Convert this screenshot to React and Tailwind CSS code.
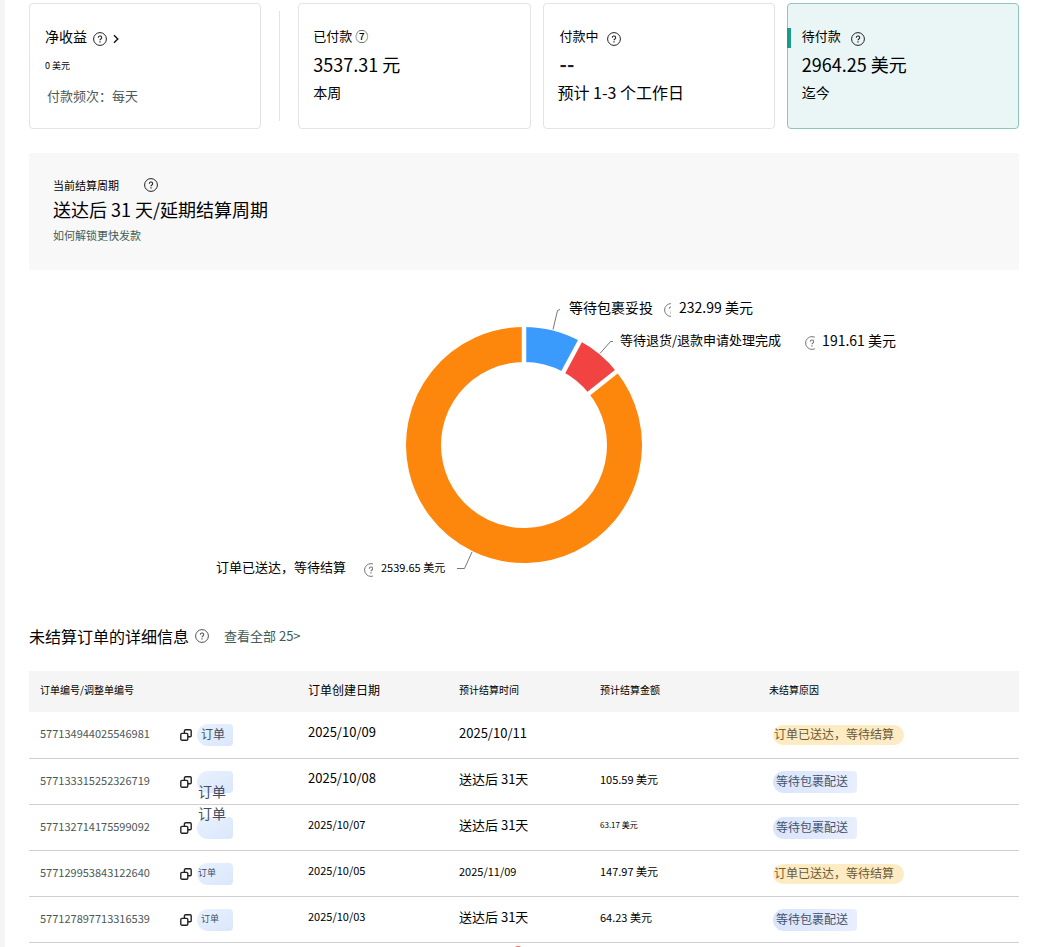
import React from 'react';

const slices = [
  { name: '等待包裹妥投', value: 232.99, color: '#3b9bfd' },
  { name: '等待退货/退款申请处理完成', value: 191.61, color: '#f24343' },
  { name: '订单已送达，等待结算', value: 2539.65, color: '#fd870d' },
];

const orders = [
  {
    id: '577134944025546981',
    tag: 'text-xs left-1 top-0',
    created: '2025/10/09',
    createdSize: 'text-[13px]',
    settle: '2025/10/11',
    settleSize: 'text-[13px]',
    amount: '',
    amountSize: 'text-[11px]',
    delivered: true,
  },
  {
    id: '577133315252326719',
    tag: 'text-sm left-px top-2.5',
    created: '2025/10/08',
    createdSize: 'text-[13px]',
    settle: '送达后 31天',
    settleSize: 'text-[13px]',
    amount: '105.59 美元',
    amountSize: 'text-[11px]',
    delivered: false,
  },
  {
    id: '577132714175599092',
    tag: 'text-sm left-px -top-3.5',
    created: '2025/10/07',
    createdSize: 'text-[11px]',
    settle: '送达后 31天',
    settleSize: 'text-[13px]',
    amount: '63.17 美元',
    amountSize: 'text-[8px]',
    delivered: false,
  },
  {
    id: '577129953843122640',
    tag: 'text-[9px] left-px top-0',
    created: '2025/10/05',
    createdSize: 'text-[11px]',
    settle: '2025/11/09',
    settleSize: 'text-[11px]',
    amount: '147.97 美元',
    amountSize: 'text-[11px]',
    delivered: true,
  },
  {
    id: '577127897713316539',
    tag: 'text-[9px] left-1 top-0',
    created: '2025/10/03',
    createdSize: 'text-[11px]',
    settle: '送达后 31天',
    settleSize: 'text-[13px]',
    amount: '64.23 美元',
    amountSize: 'text-[11px]',
    delivered: false,
  },
];

const HelpIcon = ({ viewBox = '0 0 14 14', className = 'w-3.5 text-[#222]' }) => (
  <svg viewBox={viewBox} className={`h-3.5 shrink-0 ${className}`} fill="none" stroke="currentColor" aria-hidden="true">
    <circle cx="7" cy="7" r="6.4" strokeWidth="1" />
    <path d="M5.3 5.7a1.7 1.6 0 1 1 2.6 1.3c-.6.4-.9.6-.9 1.2" strokeWidth="1.1" />
    <path d="M7 9.2v1.2" strokeWidth="1.2" />
  </svg>
);

const CopyIcon = () => (
  <svg viewBox="0 0 12 12" className="h-3 w-3" fill="none" stroke="#222" strokeWidth="1.4" aria-hidden="true">
    <rect x="0.8" y="4.4" width="7" height="6.8" rx="1.2" />
    <path d="M4.4 4.2V1.9a1.1 1.1 0 0 1 1.1-1.1h4.6a1.1 1.1 0 0 1 1.1 1.1v4.8a1.1 1.1 0 0 1-1.1 1.1H8" />
  </svg>
);

const point = (angle, radius) => {
  const rad = (angle * Math.PI) / 180;
  return [380 + radius * Math.sin(rad), 175 - radius * Math.cos(rad)];
};

const Donut = () => {
  const total = slices.reduce((sum, s) => sum + s.value, 0);
  let start = 0;
  const arcs = slices.map((s) => {
    const end = start + (s.value / total) * 360;
    const arc = { ...s, start, end };
    start = end;
    return arc;
  });

  return (
    <svg viewBox="0 0 760 330" className="h-[330px] w-[760px]" fill="none" aria-hidden="true">
      {arcs.map((a) => {
        const [x1, y1] = point(a.start, 100.5);
        const [x2, y2] = point(a.end, 100.5);
        const large = a.end - a.start > 180 ? 1 : 0;
        return (
          <path
            key={a.name}
            d={`M${x1} ${y1}A100.5 100.5 0 ${large} 1 ${x2} ${y2}`}
            stroke={a.color}
            strokeWidth="35"
          />
        );
      })}
      {arcs.map((a) => {
        const [x1, y1] = point(a.start, 80);
        const [x2, y2] = point(a.start, 121);
        return <line key={a.name} x1={x1} y1={y1} x2={x2} y2={y2} stroke="#fff" strokeWidth="4.5" />;
      })}
      {/* Leader lines */}
      <g stroke="#777" strokeWidth="1">
        <path d="M409 59.5L413.5 40.5L416 39.5" />
        <path d="M456 83.5L466.5 71.5H469" />
        <path d="M328 282L320.5 298.5H313" />
      </g>
    </svg>
  );
};

const App = () => {
  return (
    <main className="min-h-screen overflow-hidden border-l-[5px] border-[#f5f5f5] bg-white pt-[3px] pr-[22px] pl-6 font-['Noto_Sans_CJK_SC',sans-serif] text-black">
      {/* Summary cards */}
      <section className="grid grid-cols-[1fr_auto_1fr_1fr_1fr] gap-3">
        <div className="h-[126px] rounded border border-[#e3e3e3] px-[15px] pt-[22px]">
          <div className="flex items-end gap-1.5">
            <h2 className="text-sm leading-5">净收益</h2>
            <HelpIcon />
            <svg viewBox="0 0 6 14" className="h-3.5 w-1.5" fill="none" stroke="#111" strokeWidth="1.4" aria-hidden="true">
              <path d="M1 3.2L4.8 7L1 10.8" />
            </svg>
          </div>
          <p className="text-[9px] leading-10">0 美元</p>
          <p className="pl-0.5 text-[13px] leading-5 text-[#4d5958]">付款频次：每天</p>
        </div>

        <div className="mx-1.5 my-2 w-px bg-[#e3e3e3]" />

        <div className="h-[126px] rounded border border-[#e3e3e3] px-3.5 pt-[22px]">
          <h2 className="text-[13px] leading-5">已付款 ⑦</h2>
          <p className="text-lg leading-9">3537.31 元</p>
          <p className="text-sm leading-5">本周</p>
        </div>

        <div className="h-[126px] rounded border border-[#e3e3e3] px-3.5 pt-[22px]">
          <div className="flex items-end gap-2 pl-0.5">
            <h2 className="text-[13px] leading-5">付款中</h2>
            <HelpIcon />
          </div>
          <p className="pl-0.5 text-xl leading-9 font-bold text-[#1c1f2b]">--</p>
          <p className="text-base leading-5">预计 1-3 个工作日</p>
        </div>

        <div className="relative h-[126px] rounded border border-[#8ec5bd] bg-[#e9f6f5] px-3.5 pt-[22px]">
          <span className="absolute top-6 -left-px h-5 w-1 bg-[#1a9c8c]" />
          <div className="flex items-end gap-2.5">
            <h2 className="text-[13px] leading-5">待付款</h2>
            <HelpIcon />
          </div>
          <p className="text-lg leading-9">2964.25 美元</p>
          <p className="text-sm leading-5">迄今</p>
        </div>
      </section>

      {/* Settlement period */}
      <section className="mt-6 bg-[#f8f8f8] px-6 py-5">
        <div className="flex h-6 items-center gap-[25px]">
          <h2 className="text-[11px]">当前结算周期</h2>
          <HelpIcon />
        </div>
        <p className="text-lg leading-6">送达后 31 天/延期结算周期</p>
        <a href="#faster" className="block text-[11px] leading-[29px] text-[#3f5c58]">如何解锁更快发款</a>
      </section>

      {/* Breakdown chart, labels sit on the drawing */}
      <section className="flex justify-center">
        <div className="relative h-[354px] w-[760px] shrink-0">
          <Donut />
          <div className="absolute top-[27px] left-[425px] flex items-center text-sm leading-5">
            <span>{slices[0].name}</span>
            <HelpIcon viewBox="0 0 7 14" className="mt-1.5 ml-[11px] w-[7px] text-[#777]" />
            <span className="ml-2">232.99 美元</span>
          </div>
          <div className="absolute top-[60px] left-[476px] flex items-center text-[13px] leading-5 whitespace-nowrap">
            <span>{slices[1].name}</span>
            <HelpIcon viewBox="0 0 10 14" className="mt-1.5 ml-6 w-2.5 text-[#777]" />
            <span className="ml-[7px] text-sm leading-5">191.61 美元</span>
          </div>
          <div className="absolute top-[287px] left-[72px] flex items-center text-[13px] leading-5">
            <span>{slices[2].name}</span>
            <HelpIcon viewBox="0 0 9 14" className="mt-1.5 ml-[18px] w-[9px] text-[#777]" />
            <span className="ml-2 text-[11px] leading-5">2539.65 美元</span>
          </div>
        </div>
      </section>

      {/* Unsettled orders */}
      <section>
        <div className="flex h-6 items-center">
          <h2 className="text-base">未结算订单的详细信息</h2>
          <HelpIcon className="ml-1.5 w-3.5 text-[#555]" />
          <a href="#all" className="ml-[15px] text-[13px] text-[#3f5c58]">查看全部 25&gt;</a>
        </div>

        <table className="mt-[23px] w-full table-fixed text-left">
          <thead>
            <tr className="h-[41px] bg-[#f5f5f5] text-[10px] [&>th]:pb-1 [&>th]:pl-[11px] [&>th]:font-normal">
              <th className="w-[268px]">订单编号/调整单编号</th>
              <th className="w-[151px] text-xs">订单创建日期</th>
              <th className="w-[141px]">预计结算时间</th>
              <th className="w-[169px]">预计结算金额</th>
              <th>未结算原因</th>
            </tr>
          </thead>
          <tbody>
            {orders.map((o) => (
              <tr key={o.id} className="h-[46px] border-b border-[#d0d0d0] [&>td]:pl-[11px]">
                <td className="pt-px">
                  <div className="flex items-center">
                    <a href={`#${o.id}`} className="w-[140px] pb-1 text-[11px] leading-5 text-[#4a5856]">{o.id}</a>
                    <button type="button" aria-label="复制订单编号">
                      <CopyIcon />
                    </button>
                    <span className="relative ml-[5px] h-[22px] w-9 rounded-l-[11px] rounded-r-[4px] bg-linear-to-br from-[#e8f1fd] to-[#dae7fc]">
                      <span className={`absolute leading-5 whitespace-nowrap text-[#3f4d66] ${o.tag}`}>订单</span>
                    </span>
                  </div>
                </td>
                <td className={`pb-1.5 ${o.createdSize}`}>{o.created}</td>
                <td className={`pb-1 ${o.settleSize}`}>{o.settle}</td>
                <td className={`pb-1 ${o.amountSize}`}>{o.amount}</td>
                <td className="pt-px">
                  <div className="flex pl-1">
                    {o.delivered ? (
                      <span className="rounded-[10px] bg-[#fdebc4] pr-[10px] pb-0.5 pl-px text-xs leading-[18px] text-[#6b5a33]">订单已送达，等待结算</span>
                    ) : (
                      <span className="rounded-l-[11px] rounded-r-[4px] bg-linear-to-r from-[#d9e5fc] to-[#e8eefd] pr-[9px] pb-0.5 pl-[3px] text-xs leading-5 text-[#44526e]">等待包裹配送</span>
                    )}
                  </div>
                </td>
              </tr>
            ))}
          </tbody>
        </table>
      </section>

      <div className="flex h-1 justify-center overflow-hidden pt-[3px] pr-3">
        <span className="h-2 w-2 shrink-0 rounded-full bg-[#f0705c]" />
      </div>
    </main>
  );
};

export default App;
